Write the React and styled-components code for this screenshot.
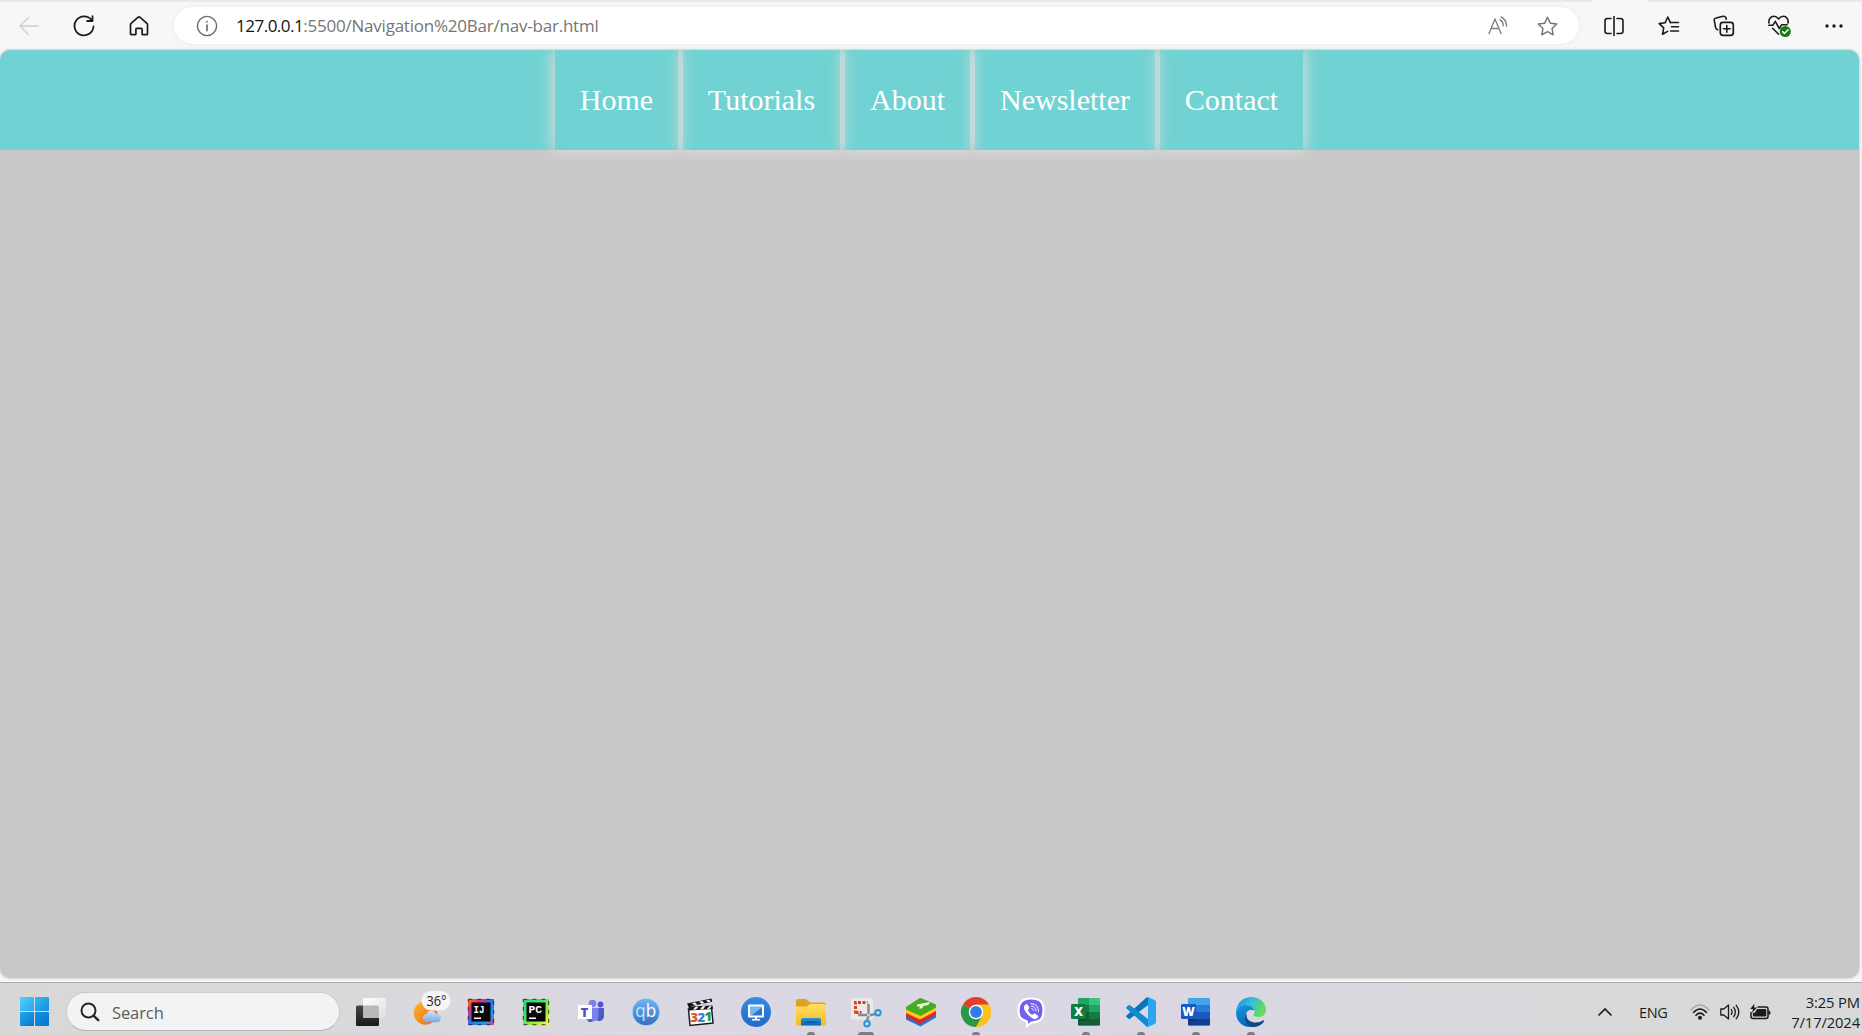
import React from "react";
import styled, { createGlobalStyle } from "styled-components";

const Global = createGlobalStyle`
  html, body { margin: 0; padding: 0; overflow: hidden; }
  *, *::before, *::after { box-sizing: border-box; }
`;

const ui = `"Open Sans", "Noto Sans", sans-serif`;

const Screen = styled.div`
  width: 1862px;
  height: 1035px;
  display: flex;
  flex-direction: column;
  overflow: hidden;
  background: #f7f7f7;
  font-family: ${ui};
`;

const TabStrip = styled.div`
  height: 2px;
  display: flex;
  justify-content: space-between;
`;
const StripEdge = styled.div`
  width: ${(p) => p.$width}px;
  height: 2px;
  background: #e8e8e8;
  border-radius: ${(p) => (p.$side === "left" ? "0 0 6px 0" : "0 0 0 6px")};
`;

const Toolbar = styled.header`
  height: 48px;
  display: flex;
  align-items: center;
  padding: 0 0 1px 1px;
`;
const ToolButton = styled.span`
  width: ${(p) => p.$width || 55}px;
  height: 36px;
  display: flex;
  flex: none;
  align-items: center;
  justify-content: center;
  color: ${(p) => p.$color || "#1b1b1b"};
  svg {
    display: block;
    fill: none;
    stroke: currentColor;
    stroke-width: 1.4;
    stroke-linecap: round;
    stroke-linejoin: round;
  }
`;
const AddressBar = styled.div`
  width: 1405px;
  height: 37px;
  margin: 0 7px 0 8px;
  display: flex;
  flex: none;
  align-items: center;
  padding: 0 7px 0 14px;
  border-radius: 19px;
  background: #fff;
  box-shadow: 0 0 4px rgba(0, 0, 0, 0.08);
`;
const Url = styled.div`
  flex: 1;
  padding-left: 11px;
  font-size: 17px;
  line-height: 24px;
  letter-spacing: -0.22px;
  white-space: nowrap;
  color: #767676;
`;
const Host = styled.span`
  letter-spacing: -0.5px;
  color: #111;
`;

const Page = styled.main`
  width: 1859px;
  height: 928px;
  flex: none;
  overflow: hidden;
  border-radius: 10px;
  background: #c9c7c8;
`;
const PageFrame = styled.div`
  width: 1859px;
  height: 928px;
  flex: none;
  border-radius: 10px;
  box-shadow: 0 0 3px rgba(0, 0, 0, 0.3);
`;
const Nav = styled.nav`
  height: 100px;
  display: flex;
  justify-content: center;
  gap: 5px;
  padding-right: 1px;
  background: #70d2d2;
`;
const NavLink = styled.a`
  width: ${(p) => p.$width}px;
  flex: none;
  text-align: center;
  white-space: nowrap;
  font: 30px/99px "Liberation Serif", "Times New Roman", serif;
  color: #fff;
  box-shadow: 0 0 15px 2px #dedcdc;
`;

const Taskbar = styled.footer`
  height: 53px;
  margin-top: 4px;
  flex: none;
  display: flex;
  align-items: center;
  padding: 5px 2px 0 20px;
  border-top: 1px solid #acacac;
  background: linear-gradient(90deg, #d8d8d9 0, #d9d9db 18%, #dad8e2 36%, #dbd7e5 55%, #d9d8df 72%, #d9d9db 85%, #d9d9da 100%);
`;
const StartLogo = styled.div`
  width: 29px;
  height: 29px;
  display: grid;
  grid-template-columns: 14px 14px;
  grid-template-rows: 14px 14px;
  gap: 1px;
`;
const StartPane = styled.i`
  background: ${(p) => p.$fill};
  border-radius: 1px;
`;
const SearchBox = styled.div`
  width: 274px;
  height: 39px;
  margin: 0 3px 0 17px;
  display: flex;
  align-items: center;
  gap: 12px;
  border-radius: 20px;
  padding: 1px 0 0 13px;
  border: 1px solid #cbcbcb;
  border-bottom-color: #b5b5b5;
  background: #f3f3f3;
  font-size: 16.5px;
  letter-spacing: -0.1px;
  color: #5c5c5c;
`;
const AppList = styled.div`
  display: flex;
  align-self: stretch;
`;
const AppCell = styled.div`
  width: 55px;
  height: 47px;
  display: flex;
  flex-direction: column;
  align-items: center;
  justify-content: space-between;
  padding-top: 9px;
  svg {
    display: block;
    flex: none;
    overflow: visible;
  }
`;
const Running = styled.i`
  width: ${(p) => p.$width}px;
  height: 3px;
  border-radius: 3px 3px 0 0;
  background: #7d7c82;
`;
const Tray = styled.div`
  flex: 1;
  display: flex;
  align-items: center;
  justify-content: flex-end;
  padding-top: 1px;
  color: #1c1c1c;
  svg {
    display: block;
    flex: none;
  }
`;
const Language = styled.span`
  width: 29px;
  margin: 0 22px 0 27px;
  font-size: 14.5px;
  letter-spacing: -0.4px;
`;
const TrayIcons = styled.div`
  display: flex;
  gap: 10px;
`;
const Clock = styled.div`
  width: 89px;
  text-align: right;
  font-size: 14.8px;
  line-height: 20px;
  letter-spacing: -0.15px;
  white-space: nowrap;
`;

const STAR = "M10 1.2l2.7 5.6 6.1.8-4.5 4.2 1.1 6.1-5.4-3-5.4 3 1.1-6.1L1.2 7.6l6.1-.8z";

const Back = () => (
  <svg width="20" height="20" viewBox="0 0 20 20"><path d="M19 10H1M9.5 1.5L1 10l8.500 8.500" /></svg>
);
const Reload = () => (
  <svg width="22" height="22" viewBox="0 0 22 22"><path strokeWidth="1.8" d="M20.500 11.500A9.500 9.500 0 1 1 18.500 5M19.500 1.200V6h-5.300" /></svg>
);
const HomeIcon = () => (
  <svg width="20" height="20" viewBox="0 0 20 20"><path strokeWidth="1.7" d="M1.500 8.700q0-.8.600-1.300L9.200 1.200q.8-.6 1.600 0l7.100 6.200q.6.500.6 1.300v9q0 1-1 1h-3.600q-.8 0-.8-.8v-4.700q0-.9-.9-.9H7.800q-.9 0-.9.900v4.700q0 .8-.8.800H2.500q-1 0-1-1z" /></svg>
);
const Info = () => (
  <svg width="22" height="22" viewBox="0 0 22 22"><circle cx="11" cy="11" r="9.600" /><path strokeWidth="1.700" d="M11 10v5.500M11 6.600v.2" /></svg>
);
const ReadAloud = () => (
  <svg width="22" height="20" viewBox="0 0 22 20"><path d="M3 17.500L9 3l6 14.500M5.200 12.500h7.600M14 3.800q3.200 1.700 3.300 6M15 1q5 2 5.700 9" /></svg>
);
const Star = () => (
  <svg width="21" height="20" viewBox="0 0 20 19"><path d={STAR} /></svg>
);
const Split = () => (
  <svg width="20" height="20" viewBox="0 0 20 20"><path strokeWidth="1.6" d="M7 2.500H3.500Q1 2.500 1 5v10q0 2.500 2.500 2.500H7M13 2.500h3.500Q19 2.500 19 5v10q0 2.500-2.500 2.500H13M10 .5v19" /></svg>
);
const Favorites = () => (
  <svg width="22" height="20" viewBox="0 0 22 20"><path strokeWidth="1.6" d="M12.500 6.800L9.800 1 7.100 6.800 1.200 7.600l4.500 4.200-1.200 6.500 5.100-2.900M13 6.500h7.500M13.500 10.800h7M12.500 15h8" /></svg>
);
const Collections = () => (
  <svg width="22" height="22" viewBox="0 0 22 22"><rect x="7.300" y="7.300" width="13" height="13" rx="2.600" strokeWidth="1.700" /><path strokeWidth="1.600" d="M13.800 10.500v6.700M10.500 13.800h6.700M4.700 14.800Q3 14.200 2.600 12.600L1.300 5.700Q.8 3.400 3.200 3L10 1.300q2-.4 2.900 1.400l.4 1.500" /></svg>
);
const Health = () => (
  <svg width="24" height="24" viewBox="-.8 0 24 24">
    <path strokeWidth="1.600" d="M1.200 9C.3 5 3.200 2.300 6 2.300q2.700 0 4.800 2.700Q13 2.300 15.700 2.300C18.500 2.300 21 5 20.200 9M1 11.300h4L7.500 7.300l4 7.200 2.300-3.700h5.500M4.800 14.300l6 5.900" />
    <circle cx="17.500" cy="17.500" r="5.500" fill="#107c10" stroke="none" />
    <path stroke="#fff" strokeWidth="1.500" d="M14.800 17.600l1.900 1.900 3.600-3.800" />
  </svg>
);
const More = () => (
  <svg width="20" height="6" viewBox="0 0 20 6"><g fill="currentColor" stroke="none"><circle cx="3" cy="3" r="1.700" /><circle cx="10" cy="3" r="1.700" /><circle cx="17" cy="3" r="1.700" /></g></svg>
);

const Svg = ({ children }) => (
  <svg width="30" height="30" viewBox="0 0 30 30">{children}</svg>
);
const Grad = ({ id, stops, x2 = 1, y2 = 1 }) => (
  <linearGradient id={id} x1="0" y1="0" x2={x2} y2={y2}>
    {stops.map((c, i) => <stop key={c} offset={i / (stops.length - 1)} stopColor={c} />)}
  </linearGradient>
);

const TaskView = () => (
  <Svg>
    <defs><Grad id="tvd" x2={0} stops={["#454541", "#191919"]} /><Grad id="tvl" stops={["#fff", "#dededf"]} /></defs>
    <rect y="8.500" width="23" height="20.500" rx="1.500" fill="url(#tvd)" />
    <rect x="7" y="1" width="23" height="20" rx="1.500" fill="url(#tvl)" />
    <path d="M7 8.500h14.500q1.500 0 1.500 1.500v11H8.500Q7 21 7 19.500z" fill="#b9b9b7" />
  </Svg>
);
const Weather = () => (
  <Svg>
    <defs><Grad id="sun" stops={["#fdb92e", "#ee660d"]} /><Grad id="cloud" x2={0} stops={["#cee6ff", "#79a8ee"]} /></defs>
    <circle cx="14.500" cy="16" r="11.700" fill="url(#sun)" />
    <path d="M16 25.200a4 4 0 0 1-.2-8q1.400-4.200 5.800-3.200 2.700.6 3.300 3.300 5 .2 5 4-.2 3.900-4.500 3.900z" fill="url(#cloud)" />
    <rect x="10.500" y="-6" width="29" height="19.500" rx="9.700" fill="#f5f5f7" />
    <text x="15.500" y="9" fontFamily={ui} fontSize="14" fill="#222" textLength="20" lengthAdjust="spacingAndGlyphs">36°</text>
  </Svg>
);
const JetBrains = ({ id, label, colors, width }) => (
  <Svg>
    <defs><Grad id={id} stops={colors} /></defs>
    <rect x="2" y="2" width="26" height="26" fill={`url(#${id})`} />
    <rect x="2.300" y="2.300" width="25.400" height="25.400" fill="none" stroke="#171520" strokeWidth=".8" strokeDasharray="4 5" />
    <rect x="5.500" y="5.500" width="19" height="19" fill="#08060b" />
    <text x="7.500" y="15.500" fontFamily={`"Liberation Mono", monospace`} fontWeight="700" fontSize="11" fill="#fff" textLength={width} lengthAdjust="spacingAndGlyphs">{label}</text>
    <rect x="8" y="20.500" width="7" height="1.500" fill="#fff" />
  </Svg>
);
const Teams = () => (
  <Svg>
    <circle cx="16.500" cy="6.500" r="3.800" fill="#7b83eb" />
    <circle cx="24.500" cy="7.500" r="2.900" fill="#5059c9" />
    <path d="M20 11h7q1 0 1 1v7a5 5 0 0 1-8 4z" fill="#5059c9" />
    <path d="M11 11h10.500q1 0 1 1v7.500a6.800 6.800 0 0 1-13 1z" fill="#7b83eb" />
    <path d="M14 11h2v14H12z" fill="#5761c9" />
    <rect x="2" y="8" width="14" height="14" fill="#fff" />
    <text x="4.800" y="19.500" fontFamily={ui} fontWeight="800" fontSize="12.500" fill="#4b53bc">T</text>
  </Svg>
);
const QB = () => (
  <Svg>
    <defs><Grad id="qb" x2={0} stops={["#72b4f5", "#356ebf"]} /></defs>
    <circle cx="15" cy="15" r="13.800" fill="url(#qb)" stroke="#bde1f9" strokeWidth=".8" />
    <text x="4.300" y="19.500" fontFamily={ui} fontSize="18" fill="#c3e6ff" textLength="21" lengthAdjust="spacingAndGlyphs">q<tspan fill="#fff">b</tspan></text>
  </Svg>
);
const Clapper = () => (
  <Svg>
    <path d="M2.500 12l23-2 1.500 16-23 2.500z" fill="#fff" stroke="#1d1d1d" strokeWidth="1.500" />
    <path d="M1 6.500l24.500-5 .8 3.300L2.500 9.700zM2.500 9.500l24-1 .4 3.500L3 13.500z" fill="#181818" />
    <path d="M6 6.200l3-.7 2.500 2-3 .6zM13 4.800l3-.7 2.500 2-3 .6zM20 3.400l3-.6 2 1.800-3 .6zM7 12.700l2.500-3 3-.1-2.500 3zM14 12.300l2.500-3 3-.1-2.500 3zM21 11.900l2.200-2.700 2.500-.1-2.200 2.700z" fill="#fff" />
    <g fontFamily={ui} fontWeight="800" fontSize="13"><text x="4.500" y="25.300" fill="#db5726">3</text><text x="11.500" y="24.800" fill="#3981c9">2</text><text x="18.500" y="24.300" fill="#289a35">1</text></g>
  </Svg>
);
const Monitor = () => (
  <Svg>
    <defs><Grad id="mon" x2={0} stops={["#358ce2", "#2369c4"]} /></defs>
    <circle cx="15" cy="15" r="15" fill="url(#mon)" />
    <rect x="7" y="7.500" width="16" height="13" rx="1" fill="#fff" />
    <path d="M9 9.500h12v.7L9.800 18.500H9z" fill="#75b7ee" /><path d="M21 10.200v8.300H9.800z" fill="#2c77cb" />
    <path d="M14 20h2v2h3v1.500h-8V22h3z" fill="#fff" />
  </Svg>
);
const Folder = () => (
  <Svg>
    <defs><Grad id="fold" x2={0} stops={["#ffdf67", "#f5b91d"]} /><Grad id="foldb" x2={0} stops={["#2693dc", "#0869b1"]} /></defs>
    <path d="M0 4q0-2 2-2h8l4 3.500h14q2 0 2 2V15H0z" fill="#dda31b" />
    <path d="M0 9.500h11l3-2.500h14q2 0 2 2v17.500q0 2-2 2H2q-2 0-2-2z" fill="url(#fold)" />
    <path d="M5 28.500V23q0-2 2-2h16q2 0 2 2v5.500z" fill="url(#foldb)" /><rect x="8.500" y="24.500" width="13.500" height="1.200" rx=".6" fill="#07538f" />
  </Svg>
);
const Snip = () => (
  <Svg>
    <rect y="1" width="22" height="21.500" rx="2" fill="#ebeaec" />
    <path d="M4.500 16.500V5.500h12" stroke="#d7421a" strokeWidth="3" strokeDasharray="3 1.500" fill="none" /><path d="M4.500 15.500h6" stroke="#d7421a" strokeWidth="3" strokeDasharray="3 1.300" fill="none" />
    <path d="M17.500 7v12L16 24M7 18h13l4-1" stroke="#858b91" strokeWidth="2.500" fill="none" />
    <circle cx="17.500" cy="18" r="1.500" fill="#d6d6d6" />
    <circle cx="27" cy="15.800" r="2.700" fill="none" stroke="#1b99de" strokeWidth="2" /><circle cx="16" cy="26.800" r="2.700" fill="none" stroke="#1b99de" strokeWidth="2" />
  </Svg>
);
const BlueStacks = () => (
  <Svg>
    <path d="M0 18.500l14 6.500 16-8v3.500L14.500 29.500 0 22.500z" fill="#2875ca" />
    <path d="M0 15l14 7 16-9v4.500L14 27 0 19.500z" fill="#e22332" />
    <path d="M0 12l14 6 16-8.500v4.500L14 22.500 0 16z" fill="#ffc918" />
    <path d="M0 10L13 1.500q1.500-.8 3 0L30 7.500v3L14.500 19 0 12.500z" fill="#48aa22" />
    <path d="M11 7.500L24 5l-1.700 3-4.500.8-2 2.700h-3l1.400-2H11z" fill="#e8ffd5" />
  </Svg>
);
const Chrome = () => (
  <Svg>
    <circle cx="15" cy="15" r="15" fill="#fbc21c" />
    <path d="M15 15L2 7.500A15 15 0 0 1 28 7.500z" fill="#e33f2e" />
    <path d="M2 7.500A15 15 0 0 0 15 30l6.500-11.200L15 15z" fill="#279846" />
    <path d="M15 7.500h13a15 15 0 0 1-13 22.500l6.500-11.200z" fill="#fbc21c" />
    <circle cx="15" cy="15" r="7.300" fill="#fff" /><circle cx="15" cy="15" r="5.900" fill="#317ce8" />
  </Svg>
);
const Viber = () => (
  <Svg>
    <path d="M15 1.500c9 0 12.500 3.500 12.500 12s-3.500 11.800-12 12L11 29v-4.500C4.500 22.500 2.500 20 2.500 13.500 2.500 5.500 6 1.500 15 1.500z" fill="#7360f2" stroke="#fff" strokeWidth="2.200" />
    <path d="M9.500 7.500q1-1.200 2.200.3l1.500 2.400q.5 1.200-1 2.200-.8.800 1 3 2.500 3 3.700 2.200 1-1.600 2.300-1l2.500 1.800q1.300 1-.2 2.400-1.700 2-4 1-6.500-3-9.300-9.800Q7.400 9 9.500 7.500z" fill="#fff" />
    <path d="M15 6.500q7.500.4 7.500 8M15.300 9q4.500.4 4.700 5M15.800 11.500q1.700.3 1.800 2" fill="none" stroke="#fff" strokeWidth=".9" strokeLinecap="round" />
  </Svg>
);
const Office = ({ letter, colors, badge }) => (
  <Svg>
    <rect x="7" y="1" width="22" height="27.500" rx="1" fill={colors[0]} />
    {letter === "X" ? (
      <>
        <path d="M18 1h10q1 0 1 1v6H18z" fill={colors[1]} /><path d="M7 8h11v7H7z" fill={colors[2]} /><path d="M18 8h11v7H18z" fill={colors[0]} />
        <path d="M7 15h11v7H7z" fill={colors[3]} /><path d="M18 15h11v7H18z" fill={colors[2]} /><path d="M7 22h22v5.500q0 1-1 1H8q-1 0-1-1z" fill={colors[3]} />
      </>
    ) : (
      <><path d="M7 8h22v7H7z" fill={colors[1]} /><path d="M7 15h22v7H7z" fill={colors[2]} /><path d="M7 22h22v5.500q0 1-1 1H8q-1 0-1-1z" fill={colors[3]} /></>
    )}
    <path d="M7 7h8v17H7z" fill="#000" opacity=".16" />
    <rect y="7" width="15" height="15" rx="1.300" fill={badge} />
    <text x="7.500" y="19" textAnchor="middle" fontFamily={ui} fontWeight="800" fontSize="12" fill="#fff">{letter}</text>
  </Svg>
);
const VSCode = () => (
  <Svg>
    <path d="M22 0v8L4 21.800q-.8.500-1.500 0L.5 20q-.7-.8 0-1.500L20.500.6z" fill="#0874bd" />
    <path d="M22 30v-8L4 8.200q-.8-.5-1.500 0L.5 10q-.7.800 0 1.500l20 17.900z" fill="#138bd1" />
    <path d="M22 0l7 3.300q1 .5 1 1.700v20q0 1.200-1 1.700L22 30q-1 .3-1.700-.8 1.700.5 1.700-1.200V2Q22 .4 20.300.8 21 0 22 0z" fill="#29a6f3" />
  </Svg>
);
const Edge = () => (
  <Svg>
    <defs><Grad id="edt" y2={0.4} stops={["#2489d2", "#32bce0", "#64dc59"]} /><Grad id="edb" x2={0.3} stops={["#1799df", "#0866bd"]} /><Grad id="edd" stops={["#125293", "#10437e"]} /></defs>
    <path d="M.3 13C1.500 5 7.800 0 15.200 0 23.500 0 30 6 30 12.500c0 5-3.700 7.500-7.500 7.500-3.300 0-5-1.200-5-2 0-.8 1.200-1.300 1.200-3.500C18.700 11 14.500 8 9.500 8 5 8 1.500 10 .3 13z" fill="url(#edt)" />
    <path d="M.1 14.500C.5 10.500 4.500 8 9.500 8c5 0 8.500 3 9.100 5.800-5-3-9.500 1.200-8.600 6.200.8 5 4 8.500 7 9.800C7 31.400-.7 24 .1 14.500z" fill="url(#edb)" />
    <path d="M11 16c-1.800 6 3 9.500 9 9.500 3 0 5-.8 6.800-2 1-.5 1.600.3 1 1.200C25.500 28 21 30 17 30c-7-.5-10.500-8.500-6-14z" fill="url(#edd)" />
  </Svg>
);

const Magnifier = () => (
  <svg width="20" height="20" viewBox="0 0 20 20" fill="none" stroke="#272727" strokeWidth="2" strokeLinecap="round"><circle cx="8.500" cy="8.500" r="7" /><path strokeWidth="2.400" d="M13.800 13.800l4.400 4.400" /></svg>
);
const Chevron = () => (
  <svg width="14" height="10" viewBox="0 0 14 10" fill="none" stroke="currentColor" strokeWidth="1.700" strokeLinecap="round"><path d="M1 8l6-6 6 6" /></svg>
);
const Wifi = () => (
  <svg width="20" height="18" viewBox="0 0 20 18" fill="none" strokeWidth="1.600" strokeLinecap="round"><path stroke="#aaa" d="M1 7q9-10 18 0" /><path stroke="currentColor" d="M3.500 9.500q6.500-7 13 0M6 12.300q4-4.300 8 0" /><circle cx="10" cy="14.800" r="2" fill="currentColor" /></svg>
);
const Volume = () => (
  <svg width="20" height="18" viewBox="0 0 20 18" fill="none" stroke="currentColor" strokeWidth="1.300" strokeLinecap="round" strokeLinejoin="round"><path d="M.8 6h3L8.500 2v14l-4.700-4h-3zM11.300 6.500q1.500 2.500 0 5M13.800 4.300q3 4.700 0 9.400M16.300 2.300q5 6.700 0 13.400" /></svg>
);
const Battery = () => (
  <svg width="21" height="18" viewBox="0 0 21 18"><path d="M7.500 4H16q2 0 2 2v7.500q0 2-2 2H3q-2 0-2-2V9" fill="none" stroke="currentColor" strokeWidth="1.500" /><path d="M7 6h8.500q.8 0 .8.800v6q0 .8-.8.800H3.700q-.8 0-.8-.8v-3h2zM18.500 7.500q2 0 2 2.200t-2 2.200zM4.500.5L.2 6H3L2 10l5-5.500H4z" fill="currentColor" /></svg>
);

const links = [
  { label: "Home", width: 123 },
  { label: "Tutorials", width: 157 },
  { label: "About", width: 125 },
  { label: "Newsletter", width: 180 },
  { label: "Contact", width: 143 },
];
const panes = [
  "linear-gradient(135deg,#50d0fb,#25a7ec)",
  "linear-gradient(135deg,#35b7f2,#168fdf)",
  "linear-gradient(135deg,#24a5ec,#0778d2)",
  "linear-gradient(135deg,#1592e2,#0874cd)",
];
const apps = [
  { icon: <TaskView /> },
  { icon: <Weather /> },
  { icon: <JetBrains id="ij" label="IJ" width="11" colors={["#f97a12", "#ec297b", "#2674f0", "#159cf0", "#ed3a78"]} /> },
  { icon: <JetBrains id="pc" label="PC" width="13.500" colors={["#21d789", "#3fe06a", "#9be83f", "#fcf84a"]} /> },
  { icon: <Teams /> },
  { icon: <QB /> },
  { icon: <Clapper /> },
  { icon: <Monitor /> },
  { icon: <Folder />, run: 8 },
  { icon: <Snip />, run: 16 },
  { icon: <BlueStacks /> },
  { icon: <Chrome />, run: 8 },
  { icon: <Viber /> },
  { icon: <Office letter="X" badge="#107c41" colors={["#21a366", "#33c481", "#107c41", "#185c37"]} />, run: 8 },
  { icon: <VSCode />, run: 8 },
  { icon: <Office letter="W" badge="#185abd" colors={["#41a5ee", "#2b7cd3", "#185abd", "#103f91"]} />, run: 8 },
  { icon: <Edge />, run: 8 },
];

export default function App() {
  return (
    <Screen>
      <Global />
      <TabStrip>
        <StripEdge $width={1592} $side="left" />
        <StripEdge $width={214} $side="right" />
      </TabStrip>
      <Toolbar>
        <ToolButton $color="#cfcfcf"><Back /></ToolButton>
        <ToolButton><Reload /></ToolButton>
        <ToolButton><HomeIcon /></ToolButton>
        <AddressBar>
          <ToolButton $width={37} $color="#6b6b6b"><Info /></ToolButton>
          <Url><Host>127.0.0.1</Host>:5500/Navigation%20Bar/nav-bar.html</Url>
          <ToolButton $width={50} $color="#808080"><ReadAloud /></ToolButton>
          <ToolButton $width={50} $color="#757575"><Star /></ToolButton>
        </AddressBar>
        <ToolButton><Split /></ToolButton>
        <ToolButton><Favorites /></ToolButton>
        <ToolButton><Collections /></ToolButton>
        <ToolButton><Health /></ToolButton>
        <ToolButton><More /></ToolButton>
      </Toolbar>
      <PageFrame>
        <Page>
          <Nav>{links.map((l) => <NavLink key={l.label} $width={l.width}>{l.label}</NavLink>)}</Nav>
        </Page>
      </PageFrame>
      <Taskbar>
        <StartLogo>{panes.map((p) => <StartPane key={p} $fill={p} />)}</StartLogo>
        <SearchBox><Magnifier />Search</SearchBox>
        <AppList>
          {apps.map((a, i) => (
            <AppCell key={i}>{a.icon}{a.run && <Running $width={a.run} />}</AppCell>
          ))}
        </AppList>
        <Tray>
          <Chevron />
          <Language>ENG</Language>
          <TrayIcons><Wifi /><Volume /><Battery /></TrayIcons>
          <Clock>3:25 PM<br />7/17/2024</Clock>
        </Tray>
      </Taskbar>
    </Screen>
  );
}
